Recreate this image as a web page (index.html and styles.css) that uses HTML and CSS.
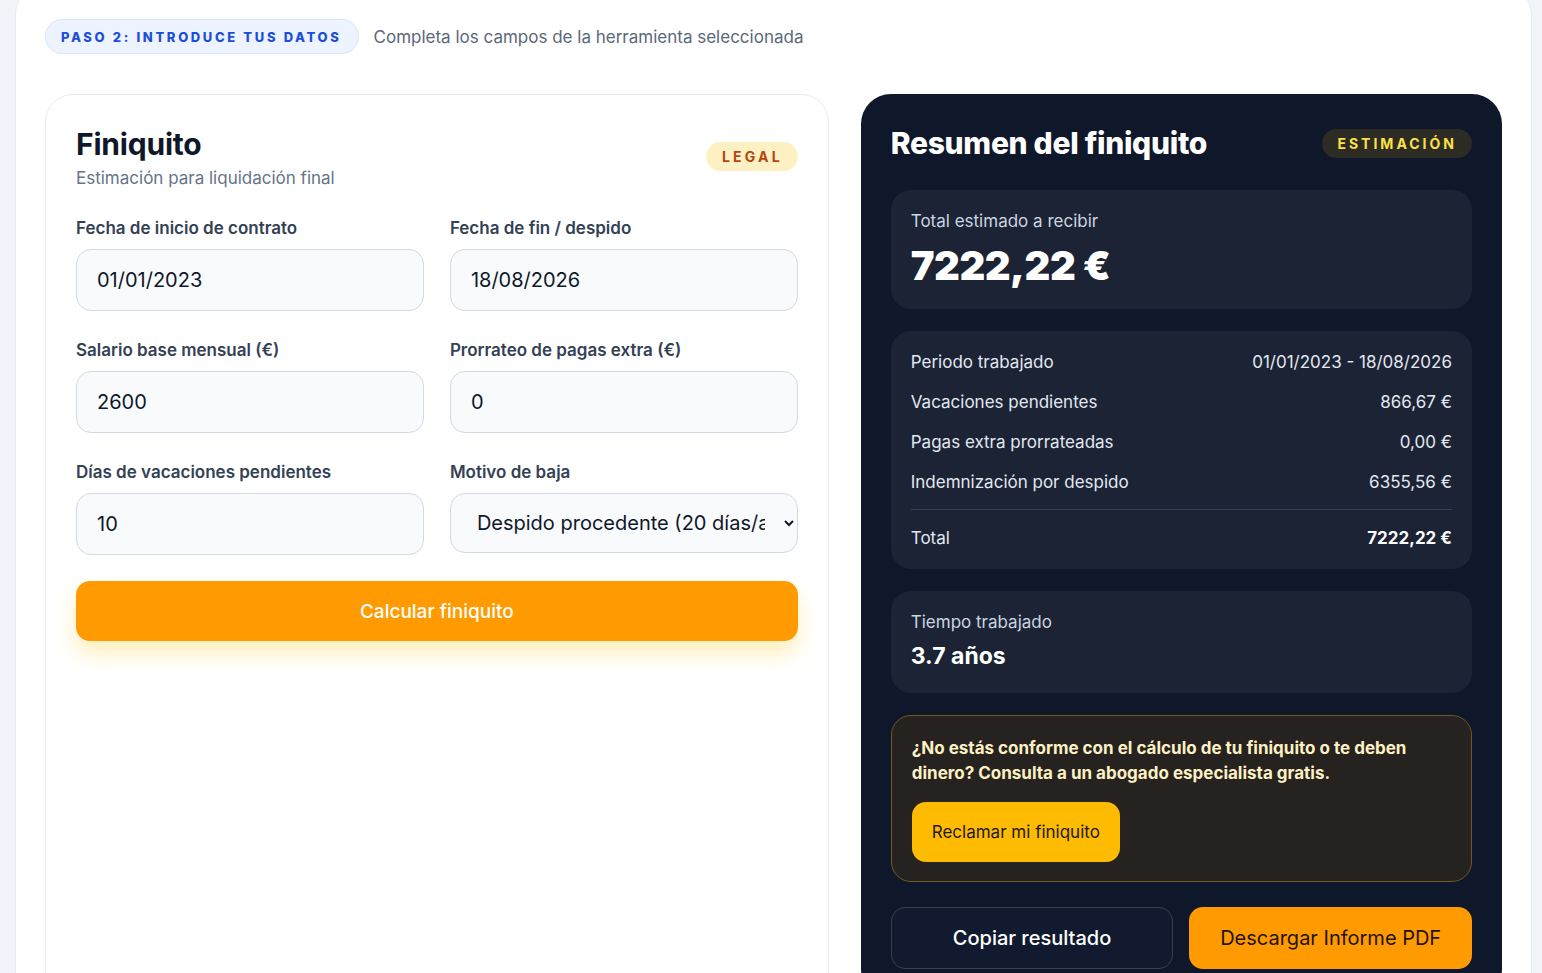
FILE: index.html
```html
<!DOCTYPE html>
<html lang="es">
  <head>
    <meta charset="utf-8">
    <title>Calculadora de finiquito</title>
    <link rel="stylesheet" href="styles.css">
  </head>
  <body>
    <div class="page">
      <div class="panel">
        <div class="step">
          <span class="step-badge">PASO 2: INTRODUCE TUS DATOS</span>
          <span class="step-text">Completa los campos de la herramienta seleccionada</span>
        </div>

        <div class="tool">
          <div class="form-card">
            <div class="card-head">
              <div>
                <h2 class="card-title">Finiquito</h2>
                <p class="card-sub">Estimación para liquidación final</p>
              </div>
              <span class="tag-legal">LEGAL</span>
            </div>

            <div class="fields">
              <div class="field">
                <label>Fecha de inicio de contrato</label>
                <input class="input" type="text" value="01/01/2023">
              </div>
              <div class="field">
                <label>Fecha de fin / despido</label>
                <input class="input" type="text" value="18/08/2026">
              </div>
              <div class="field">
                <label>Salario base mensual (€)</label>
                <input class="input" type="text" value="2600">
              </div>
              <div class="field">
                <label>Prorrateo de pagas extra (€)</label>
                <input class="input" type="text" value="0">
              </div>
              <div class="field">
                <label>Días de vacaciones pendientes</label>
                <input class="input" type="text" value="10">
              </div>
              <div class="field">
                <label>Motivo de baja</label>
                <select class="input select">
                  <option>Despido procedente (20 días/año)</option>
                  <option>Despido improcedente (33 días/año)</option>
                  <option>Baja voluntaria</option>
                </select>
              </div>
            </div>

            <button class="btn-calc">Calcular finiquito</button>
          </div>

          <div class="summary">
            <div class="summary-head">
              <h2 class="summary-title">Resumen del finiquito</h2>
              <span class="tag-estimate">ESTIMACIÓN</span>
            </div>

            <div class="box total-box">
              <div class="box-label">Total estimado a recibir</div>
              <div class="big-total">7222,22 €</div>
            </div>

            <div class="box lines">
              <div class="line"><span>Periodo trabajado</span><span>01/01/2023 - 18/08/2026</span></div>
              <div class="line"><span>Vacaciones pendientes</span><span>866,67 €</span></div>
              <div class="line"><span>Pagas extra prorrateadas</span><span>0,00 €</span></div>
              <div class="line"><span>Indemnización por despido</span><span>6355,56 €</span></div>
              <div class="line-total"><span>Total</span><strong>7222,22 €</strong></div>
            </div>

            <div class="box time-box">
              <div class="box-label">Tiempo trabajado</div>
              <div class="time-value">3.7 años</div>
            </div>

            <div class="cta">
              <p>¿No estás conforme con el cálculo de tu finiquito o te deben dinero? Consulta a un abogado especialista gratis.</p>
              <button class="btn-claim">Reclamar mi finiquito</button>
            </div>

            <div class="actions">
              <button class="btn-copy">Copiar resultado</button>
              <button class="btn-pdf">Descargar Informe PDF</button>
            </div>
          </div>
        </div>
      </div>
    </div>
  </body>
</html>
```

FILE: styles.css
```css
body {
  margin: 0;
  font-family: Inter, "Noto Sans", Arial, sans-serif;
  background-color: #f1f4f8;
  color: #0f172a;
}
.page {
  padding: 0 10px 0 15px;
  height: 973px;
  overflow: hidden;
}
.panel {
  margin-top: -12px;
  background-color: #fff;
  border: 1px solid #e6eaf0;
  border-radius: 26px;
  padding: 30px 29px 40px 29px;
  min-height: 1100px;
}
.step {
  display: flex;
  align-items: center;
  gap: 15px;
}
.step-badge {
  display: inline-block;
  padding: 9px 16px 8px 15px;
  border-radius: 20px;
  background-color: #eef4ff;
  border: 1px solid #d9e5fd;
  color: #1d4ed8;
  font-size: 13px;
  font-weight: 800;
  letter-spacing: 2.65px;
}
.step-text {
  font-size: 17px;
  color: #5b677a;
}
.tool {
  margin-top: 40px;
  display: grid;
  grid-template-columns: 11fr 9fr;
  gap: 32px;
  align-items: start;
}

/* form */
.form-card {
  border: 1px solid #e6eaf0;
  border-radius: 28px;
  background-color: #fff;
  padding: 31px 30px 400px 30px;
}
.card-head {
  display: flex;
  justify-content: space-between;
  align-items: flex-start;
}
.card-title {
  margin: 0;
  font-size: 30px;
  font-weight: 700;
  letter-spacing: -0.2px;
  color: #0f172a;
}
.card-sub {
  margin: 6px 0 0 0;
  font-size: 17px;
  color: #64748b;
}
.tag-legal {
  margin-top: 16px;
  padding: 6px 15px 6px 16px;
  border-radius: 16px;
  background-color: #fdf1c4;
  color: #b4460e;
  font-size: 14px;
  font-weight: 700;
  letter-spacing: 3.2px;
}
.fields {
  margin-top: 30px;
  display: grid;
  grid-template-columns: 1fr 1fr;
  column-gap: 26px;
  row-gap: 29px;
}
.field label {
  display: block;
  font-size: 17px;
  font-weight: 600;
  color: #334155;
  margin-bottom: 11px;
}
.input {
  display: block;
  box-sizing: border-box;
  width: 100%;
  height: 62px;
  padding: 0 20px;
  border: 1px solid #d3d9e3;
  border-radius: 15px;
  background-color: #f8fafc;
  font-family: inherit;
  font-size: 20px;
  color: #0f172a;
  outline: none;
}
.select {
  height: 60px;
  padding: 0 16px 0 22px;
}
.btn-calc {
  margin-top: 26px;
  width: 100%;
  height: 60px;
  border: none;
  border-radius: 14px;
  background-color: #ff9a00;
  color: #fff;
  font-family: inherit;
  font-size: 19px;
  font-weight: 500;
  box-shadow: 0 12px 22px rgba(255, 196, 0, 0.28);
  cursor: pointer;
}

/* summary */
.summary {
  background-color: #0f172a;
  border-radius: 30px;
  padding: 31px 30px 30px 30px;
  color: #fff;
}
.summary-head {
  display: flex;
  justify-content: space-between;
  align-items: center;
  margin-bottom: 29px;
}
.summary-title {
  margin: 0;
  font-size: 30px;
  font-weight: 800;
  letter-spacing: -0.3px;
}
.tag-estimate {
  padding: 6px 15px 6px 15px;
  border-radius: 16px;
  background-color: #2d2c24;
  color: #fde047;
  font-size: 14px;
  font-weight: 700;
  letter-spacing: 3px;
}
.box {
  background-color: #1c2335;
  border-radius: 20px;
  padding: 20px;
  margin-bottom: 22px;
}
.box-label {
  font-size: 17px;
  color: #cbd5e1;
}
.total-box {
  padding: 21px 20px 19px 20px;
}
.big-total {
  margin-top: 10px;
  font-size: 40px;
  font-weight: 900;
  letter-spacing: -0.5px;
}
.lines {
  padding: 11px 20px 19px 20px;
}
.line {
  display: flex;
  justify-content: space-between;
  align-items: center;
  height: 40px;
  font-size: 17px;
  color: #e2e8f0;
}
.line-total {
  display: flex;
  justify-content: space-between;
  align-items: center;
  height: 24px;
  margin-top: 7px;
  padding-top: 16px;
  border-top: 1px solid #334155;
  font-size: 17px;
  color: #e2e8f0;
}
.line-total strong {
  font-weight: 700;
  color: #fff;
}
.time-box {
  padding: 21px 20px 23px 20px;
}
.time-value {
  margin-top: 10px;
  font-size: 23px;
  font-weight: 700;
}
.cta {
  border: 1px solid #6e5a22;
  border-radius: 20px;
  background-color: #25221f;
  padding: 20px 20px 19px 20px;
  margin-bottom: 25px;
}
.cta p {
  margin: 0 0 16px 0;
  font-size: 17px;
  font-weight: 700;
  line-height: 25px;
  color: #fdf1c4;
}
.btn-claim {
  height: 60px;
  padding: 0 20px;
  border: none;
  border-radius: 14px;
  background-color: #ffbb00;
  color: #1c1917;
  font-family: inherit;
  font-size: 17px;
}
.actions {
  display: grid;
  grid-template-columns: 1fr 1fr;
  gap: 16px;
}
.btn-copy,
.btn-pdf {
  height: 62px;
  border-radius: 14px;
  font-family: inherit;
  font-size: 20px;
}
.btn-copy {
  background-color: #111a2e;
  border: 1px solid #334155;
  color: #fff;
  font-weight: 500;
}
.btn-pdf {
  background-color: #ff9a00;
  border: none;
  color: #1f1300;
}
```
